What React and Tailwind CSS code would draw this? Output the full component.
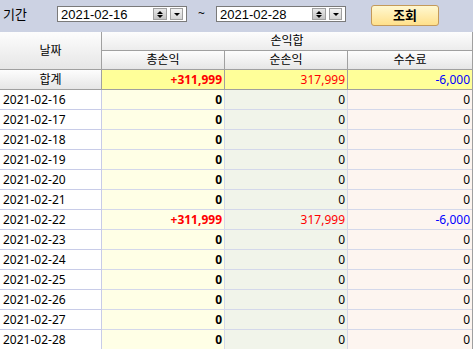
import React from "react";

const rows = [
  ["2021-02-16", "0", "0", "0"],
  ["2021-02-17", "0", "0", "0"],
  ["2021-02-18", "0", "0", "0"],
  ["2021-02-19", "0", "0", "0"],
  ["2021-02-20", "0", "0", "0"],
  ["2021-02-21", "0", "0", "0"],
  ["2021-02-22", "+311,999", "317,999", "-6,000"],
  ["2021-02-23", "0", "0", "0"],
  ["2021-02-24", "0", "0", "0"],
  ["2021-02-25", "0", "0", "0"],
  ["2021-02-26", "0", "0", "0"],
  ["2021-02-27", "0", "0", "0"],
  ["2021-02-28", "0", "0", "0"],
];

const font = { fontFamily: '"Noto Sans", "Noto Sans CJK KR", sans-serif' };

// date field with spin + dropdown buttons
function DateBox({ value }) {
  return (
    <div className="flex items-center w-[130px] h-[16px] bg-white border border-[#7a7a7a] pl-[3px] pr-[3px]">
      <span className="flex-1 text-[13px] leading-none text-black" style={{ fontFamily: '"Liberation Sans", sans-serif' }}>
        {value}
      </span>
      <div className="w-[14px] h-[12px] bg-gradient-to-b from-[#e8e8e8] to-[#c4c4c4] border border-[#a0a0a0] flex flex-col items-center justify-center gap-[1px]">
        <div className="w-0 h-0 border-l-[3px] border-r-[3px] border-b-[3px] border-l-transparent border-r-transparent border-b-black" />
        <div className="w-0 h-0 border-l-[3px] border-r-[3px] border-t-[3px] border-l-transparent border-r-transparent border-t-black" />
      </div>
      <div className="ml-[3px] w-[13px] h-[12px] bg-gradient-to-b from-[#f4f4f4] to-[#d4d4d4] border border-[#a0a0a0] flex items-center justify-center">
        <div className="w-0 h-0 border-l-[3px] border-r-[3px] border-t-[3px] border-l-transparent border-r-transparent border-t-black" />
      </div>
    </div>
  );
}

export default function App() {
  return (
    <div className="w-[473px] h-[349px] overflow-hidden bg-white text-[12px] text-black" style={font}>
      {/* search bar */}
      <div className="h-[32px] bg-[#ccd2e3] flex items-start pt-[6px]">
        <span className="w-[57px] pl-[3px] text-[13px] leading-[16px]">기간</span>
        <DateBox value="2021-02-16" />
        <span className="w-[29px] text-center text-[12px] leading-[16px]">~</span>
        <DateBox value="2021-02-28" />
        <button className="ml-[25px] -mt-[1px] w-[68px] h-[21px] rounded-[3px] border border-[#c49a5a] bg-gradient-to-b from-[#fff8d0] to-[#ffe08a] text-[13px] font-bold leading-none">
          조회
        </button>
      </div>

      {/* header */}
      <div className="grid grid-cols-[102px_123px_123px_124px] w-[473px] border-r border-[#a0a0a0]">
        <div className="row-span-2 h-[38px] flex items-center justify-center border-r border-b border-[#a0a0a0] bg-gradient-to-b from-[#fdfdfd] to-[#e6e6e6]">
          날짜
        </div>
        <div className="col-span-3 h-[19px] flex items-center justify-center border-b border-[#a0a0a0] bg-gradient-to-b from-[#fdfdfd] to-[#ececec]">
          손익합
        </div>
        {["총손익", "순손익", "수수료"].map((t, i) => (
          <div
            key={t}
            className={`h-[19px] flex items-center justify-center border-b border-[#a0a0a0] bg-gradient-to-b from-[#fdfdfd] to-[#e6e6e6] ${i < 2 ? "border-r" : ""}`}
          >
            {t}
          </div>
        ))}

        {/* total row */}
        <div className="h-[20px] flex items-center justify-center border-r border-b border-[#a0a0a0] bg-gradient-to-b from-[#fdfdfd] to-[#e6e6e6]">
          합계
        </div>
        <div className="h-[20px] flex items-center justify-end pr-[2px] border-r border-b border-[#a0a0a0] bg-[#ffff99] text-[#ff0000] font-bold">
          +311,999
        </div>
        <div className="h-[20px] flex items-center justify-end pr-[2px] border-r border-b border-[#a0a0a0] bg-[#ffff99] text-[#ff0000]">
          317,999
        </div>
        <div className="h-[20px] flex items-center justify-end pr-[2px] border-b border-[#a0a0a0] bg-[#ffff99] text-[#0000ff]">
          -6,000
        </div>

        {/* data rows */}
        {rows.map(([d, a, b, c]) => {
          const hit = a !== "0";
          return (
            <React.Fragment key={d}>
              <div className="h-[20px] flex items-center pl-[3px] border-r border-b border-[#c8cce8] bg-white">{d}</div>
              <div className={`h-[20px] flex items-center justify-end pr-[2px] border-r border-b border-[#d4d8ea] bg-[#ffffe6] font-bold ${hit ? "text-[#ff0000]" : ""}`}>
                {a}
              </div>
              <div className={`h-[20px] flex items-center justify-end pr-[2px] border-r border-b border-[#d4d8ea] bg-[#f1f4ea] ${hit ? "text-[#ff0000]" : ""}`}>
                {b}
              </div>
              <div className={`h-[20px] flex items-center justify-end pr-[2px] border-b border-[#d4d8ea] bg-[#fdf5f0] ${hit ? "text-[#0000ff]" : ""}`}>
                {c}
              </div>
            </React.Fragment>
          );
        })}
      </div>
    </div>
  );
}
